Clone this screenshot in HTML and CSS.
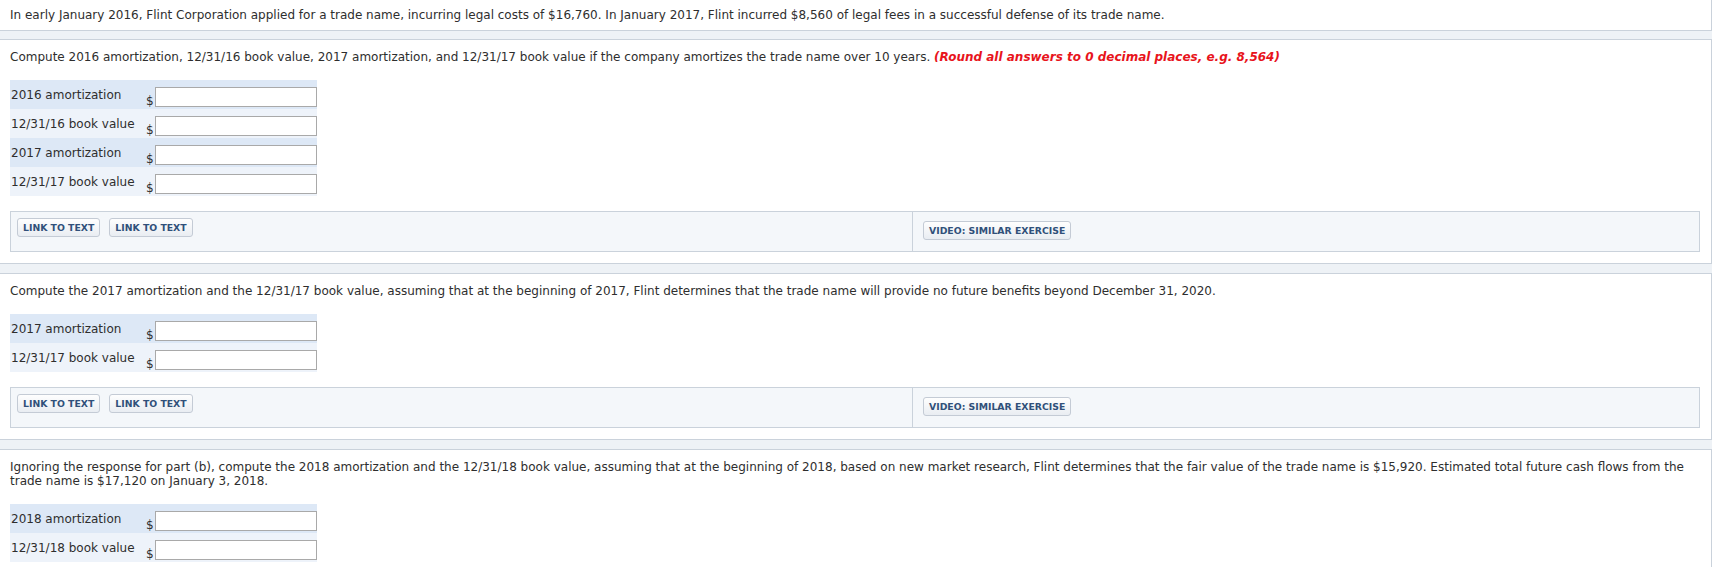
FILE: index.html
```html
<!DOCTYPE html>
<html>
<head>
<meta charset="utf-8">
<title>Flint Corporation trade name</title>
<link rel="stylesheet" href="styles.css">
</head>
<body>
<div class="page">
  <div class="panel intro">
    <p class="text">In early January 2016, Flint Corporation applied for a trade name, incurring legal costs of $16,760. In January 2017, Flint incurred $8,560 of legal fees in a successful defense of its trade name.</p>
  </div>

  <div class="panel">
    <p class="text">Compute 2016 amortization, 12/31/16 book value, 2017 amortization, and 12/31/17 book value if the company amortizes the trade name over 10 years. <span class="hint">(Round all answers to 0 decimal places, e.g. 8,564)</span></p>
    <div class="answers">
      <div class="row dark"><div class="label">2016 amortization</div><span class="cur">$</span><input class="field" type="text"></div>
      <div class="row light"><div class="label">12/31/16 book value</div><span class="cur">$</span><input class="field" type="text"></div>
      <div class="row dark"><div class="label">2017 amortization</div><span class="cur">$</span><input class="field" type="text"></div>
      <div class="row light"><div class="label">12/31/17 book value</div><span class="cur">$</span><input class="field" type="text"></div>
    </div>
    <div class="links">
      <div class="links-left"><a class="btn">LINK TO TEXT</a><a class="btn">LINK TO TEXT</a></div>
      <div class="links-right"><a class="btn">VIDEO: SIMILAR EXERCISE</a></div>
    </div>
  </div>

  <div class="panel">
    <p class="text">Compute the 2017 amortization and the 12/31/17 book value, assuming that at the beginning of 2017, Flint determines that the trade name will provide no future benefits beyond December 31, 2020.</p>
    <div class="answers">
      <div class="row dark"><div class="label">2017 amortization</div><span class="cur">$</span><input class="field" type="text"></div>
      <div class="row light"><div class="label">12/31/17 book value</div><span class="cur">$</span><input class="field" type="text"></div>
    </div>
    <div class="links">
      <div class="links-left"><a class="btn">LINK TO TEXT</a><a class="btn">LINK TO TEXT</a></div>
      <div class="links-right"><a class="btn">VIDEO: SIMILAR EXERCISE</a></div>
    </div>
  </div>

  <div class="panel">
    <p class="text">Ignoring the response for part (b), compute the 2018 amortization and the 12/31/18 book value, assuming that at the beginning of 2018, based on new market research, Flint determines that the fair value of the trade name is $15,920. Estimated total future cash flows from the trade name is $17,120 on January 3, 2018.</p>
    <div class="answers">
      <div class="row dark"><div class="label">2018 amortization</div><span class="cur">$</span><input class="field" type="text"></div>
      <div class="row light"><div class="label">12/31/18 book value</div><span class="cur">$</span><input class="field" type="text"></div>
    </div>
  </div>
</div>
</body>
</html>
```

FILE: styles.css
```css
html, body {
  margin: 0;
  padding: 0;
  background: #ffffff;
  overflow: hidden;
}

body {
  font-family: "DejaVu Sans", Verdana, sans-serif;
  font-size: 12px;
  line-height: 14px;
  color: #2e2e2e;
}

.page {
  margin-top: -1px;
  margin-left: -1px;
  width: 1713px;
  background: #eef2f6;
  display: flex;
  flex-direction: column;
  gap: 9px;
}

.panel {
  background: #ffffff;
  border: 1px solid #cad2db;
  padding: 10px 11px 11px 10px;
}

.intro {
  padding-top: 8px;
  padding-bottom: 8px;
  margin-bottom: -1px;
}

.text {
  margin: 0;
}

.hint {
  color: #e8141c;
  font-weight: bold;
  font-style: italic;
}

.answers {
  display: flex;
  flex-direction: column;
  width: 307px;
  margin-top: 16px;
}

.row {
  display: grid;
  grid-template-columns: 136px 9px 162px;
  height: 29px;
}

.row.dark {
  background: #dde8f6;
}

.row.light {
  background: #eef3fa;
}

.label {
  padding-top: 8px;
  padding-left: 1px;
  white-space: nowrap;
}

.cur {
  align-self: end;
  line-height: 16px;
}

.field {
  margin: 7px 0 0 0;
  height: 20px;
  width: 162px;
  box-sizing: border-box;
  border: 1px solid #a9a9a9;
  padding: 0 3px;
  background: #ffffff;
  font: inherit;
}

.links {
  display: flex;
  margin-top: 15px;
  height: 41px;
  box-sizing: border-box;
  border: 1px solid #cad2db;
  background: #f4f7fa;
}

.links-left {
  width: 901px;
  box-sizing: border-box;
  padding: 6px;
  display: flex;
  gap: 9px;
  align-items: flex-start;
}

.links-right {
  flex: 1;
  border-left: 1px solid #cad2db;
  padding: 9px 10px;
  display: flex;
  align-items: flex-start;
}

.btn {
  display: inline-block;
  height: 19px;
  box-sizing: border-box;
  padding: 0 5px;
  border: 1px solid #c4cbd5;
  border-radius: 3px;
  background: linear-gradient(#fefefe, #e9edf2);
  color: #30507a;
  font-weight: bold;
  font-size: 9.3px;
  line-height: 17px;
  white-space: nowrap;
}
```
